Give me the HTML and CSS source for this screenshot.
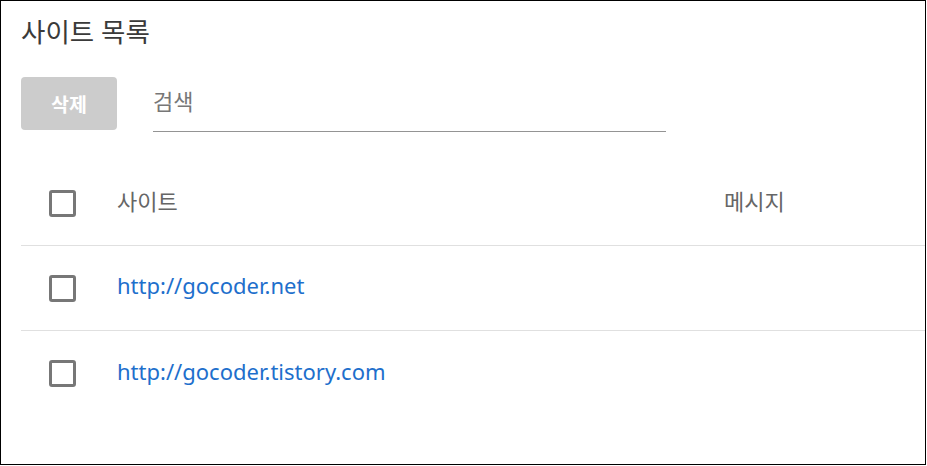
FILE: index.html
```html
<!DOCTYPE html>
<html lang="ko">
<head>
<meta charset="utf-8">
<title>사이트 목록</title>
<link rel="stylesheet" href="styles.css">
</head>
<body>
<div class="frame">
  <h1 class="title">사이트 목록</h1>
  <div class="toolbar">
    <button class="btn-delete" disabled>삭제</button>
    <input class="search" type="text" placeholder="검색">
  </div>
  <div class="table">
    <div class="row head">
      <div class="cell check"><span class="box"></span></div>
      <div class="cell text">사이트</div>
      <div class="cell text">메시지</div>
    </div>
    <div class="row">
      <div class="cell check"><span class="box"></span></div>
      <div class="cell text"><a class="link" href="#">http://gocoder.net</a></div>
      <div class="cell text"></div>
    </div>
    <div class="row last">
      <div class="cell check"><span class="box"></span></div>
      <div class="cell text"><a class="link" href="#">http://gocoder.tistory.com</a></div>
      <div class="cell text"></div>
    </div>
  </div>
</div>
</body>
</html>
```

FILE: styles.css
```css
* { box-sizing: border-box; }
html, body { margin: 0; padding: 0; background: #fff; }
body {
  font-family: "Noto Sans", "Noto Sans CJK KR", sans-serif;
  color: #333;
}
.frame {
  width: 926px;
  height: 465px;
  border: 1px solid #000;
  padding: 13px 0 0 20px;
  overflow: hidden;
}
.title {
  margin: 0;
  font-size: 26.5px;
  font-weight: 400;
  line-height: 36px;
  color: #3a3a3a;
}
.toolbar {
  display: flex;
  align-items: flex-start;
  gap: 36px;
  margin-top: 27px;
}
.btn-delete {
  width: 96px;
  height: 53px;
  border: none;
  border-radius: 4px;
  background: #cccccc;
  color: #fff;
  font-family: "Noto Sans", "Noto Sans CJK KR", sans-serif;
  font-size: 19.5px;
  font-weight: 700;
  padding: 0;
}
.search {
  width: 513px;
  height: 55px;
  border: none;
  border-bottom: 1px solid #949494;
  outline: none;
  padding: 0 0 6px 0;
  font-family: "Noto Sans", "Noto Sans CJK KR", sans-serif;
  font-size: 22px;
  color: #333;
  background: transparent;
}
.search::placeholder { color: #777; }
.table {
  margin-top: 30px;
}
.row {
  display: grid;
  grid-template-columns: 96px 607px 1fr;
  align-items: center;
  height: 85px;
  border-bottom: 1px solid #e0e0e0;
}
.row.head { height: 84px; }
.row.last { border-bottom: none; }
.cell {
  font-size: 22px;
  color: #666;
  line-height: 30px;
}
.text { padding-bottom: 6px; }
.check { padding-left: 28px; display: flex; align-items: center; }
.box {
  display: block;
  width: 27px;
  height: 27px;
  border: 3px solid #777;
  border-radius: 3px;
}
.link {
  color: #1e6fcc;
  text-decoration: none;
  font-size: 22px;
}
```
